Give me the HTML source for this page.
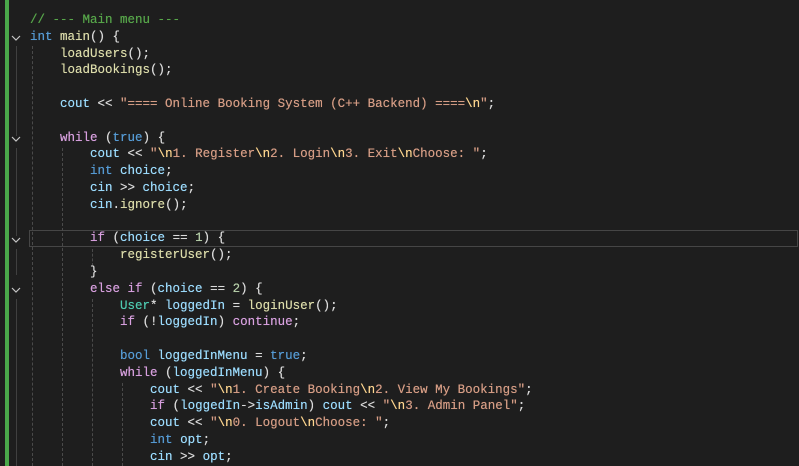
<!DOCTYPE html>
<html><head><meta charset="utf-8"><style>
html,body{margin:0;padding:0;background:#1e1e1e;width:799px;height:466px;overflow:hidden;position:relative}
.bar{position:absolute;left:5px;top:0;width:4px;height:466px;background:#4aa84a}
.code{position:absolute;left:30px;top:12px;font-family:"Liberation Mono",monospace;font-size:12.5px;line-height:16.8px;color:#dcdcdc;white-space:pre;text-shadow:0 0 0.4px currentColor}
.k{color:#569cd6}.c{color:#d8a0df}.s{color:#d69d85}.e{color:#ffd68f}.v{color:#9cdcfe}.f{color:#dcdcaa}.t{color:#4ec9b0}.m{color:#57a64a}.n{color:#b5cea8}
.g{position:absolute;width:0;border-left:1px dashed #4a4a4a}
.fl{position:absolute;left:16px;width:0;border-left:1px solid #404040}
.chev{position:absolute;left:10px;width:12px;height:10px}
.cur{position:absolute;left:29px;top:230px;width:767px;height:15px;border:1px solid #464646}
</style></head><body>
<div class="bar"></div>
<div class="cur"></div>
<div class="g" style="left:32px;top:46px;height:420px"></div>
<div class="g" style="left:62px;top:148px;height:318px"></div>
<div class="g" style="left:92px;top:249px;height:17px"></div>
<div class="g" style="left:92px;top:299px;height:167px"></div>
<div class="g" style="left:122px;top:383px;height:83px"></div>
<div class="fl" style="top:46px;height:90px"></div>
<div class="fl" style="top:148px;height:88px"></div>
<div class="fl" style="top:249px;height:26px"></div>
<div class="fl" style="top:299px;height:167px"></div>
<svg class="chev" style="top:33px" viewBox="0 0 12 10"><path d="M2 3l4 4 4-4" fill="none" stroke="#c5c5c5" stroke-width="1.2"/></svg>
<svg class="chev" style="top:134px" viewBox="0 0 12 10"><path d="M2 3l4 4 4-4" fill="none" stroke="#c5c5c5" stroke-width="1.2"/></svg>
<svg class="chev" style="top:235px" viewBox="0 0 12 10"><path d="M2 3l4 4 4-4" fill="none" stroke="#c5c5c5" stroke-width="1.2"/></svg>
<svg class="chev" style="top:285px" viewBox="0 0 12 10"><path d="M2 3l4 4 4-4" fill="none" stroke="#c5c5c5" stroke-width="1.2"/></svg>
<div class="code"><span class="m">// --- Main menu ---</span>
<span class="k">int</span> <span class="f">main</span>() {
    <span class="f">loadUsers</span>();
    <span class="f">loadBookings</span>();

    <span class="v">cout</span> &lt;&lt; <span class="s">"==== Online Booking System (C++ Backend) ====</span><span class="e">\n</span><span class="s">"</span>;

    <span class="c">while</span> (<span class="k">true</span>) {
        <span class="v">cout</span> &lt;&lt; <span class="s">"</span><span class="e">\n</span><span class="s">1. Register</span><span class="e">\n</span><span class="s">2. Login</span><span class="e">\n</span><span class="s">3. Exit</span><span class="e">\n</span><span class="s">Choose: "</span>;
        <span class="k">int</span> <span class="v">choice</span>;
        <span class="v">cin</span> &gt;&gt; <span class="v">choice</span>;
        <span class="v">cin</span>.<span class="f">ignore</span>();

        <span class="c">if</span> (<span class="v">choice</span> == <span class="n">1</span>) {
            <span class="f">registerUser</span>();
        }
        <span class="c">else if</span> (<span class="v">choice</span> == <span class="n">2</span>) {
            <span class="t">User</span>* <span class="v">loggedIn</span> = <span class="f">loginUser</span>();
            <span class="c">if</span> (!<span class="v">loggedIn</span>) <span class="c">continue</span>;

            <span class="k">bool</span> <span class="v">loggedInMenu</span> = <span class="k">true</span>;
            <span class="c">while</span> (<span class="v">loggedInMenu</span>) {
                <span class="v">cout</span> &lt;&lt; <span class="s">"</span><span class="e">\n</span><span class="s">1. Create Booking</span><span class="e">\n</span><span class="s">2. View My Bookings"</span>;
                <span class="c">if</span> (<span class="v">loggedIn</span>-&gt;<span class="v">isAdmin</span>) <span class="v">cout</span> &lt;&lt; <span class="s">"</span><span class="e">\n</span><span class="s">3. Admin Panel"</span>;
                <span class="v">cout</span> &lt;&lt; <span class="s">"</span><span class="e">\n</span><span class="s">0. Logout</span><span class="e">\n</span><span class="s">Choose: "</span>;
                <span class="k">int</span> <span class="v">opt</span>;
                <span class="v">cin</span> &gt;&gt; <span class="v">opt</span>;
                <span class="v">cin</span>.<span class="f">ignore</span>();
</div>
</body></html>
